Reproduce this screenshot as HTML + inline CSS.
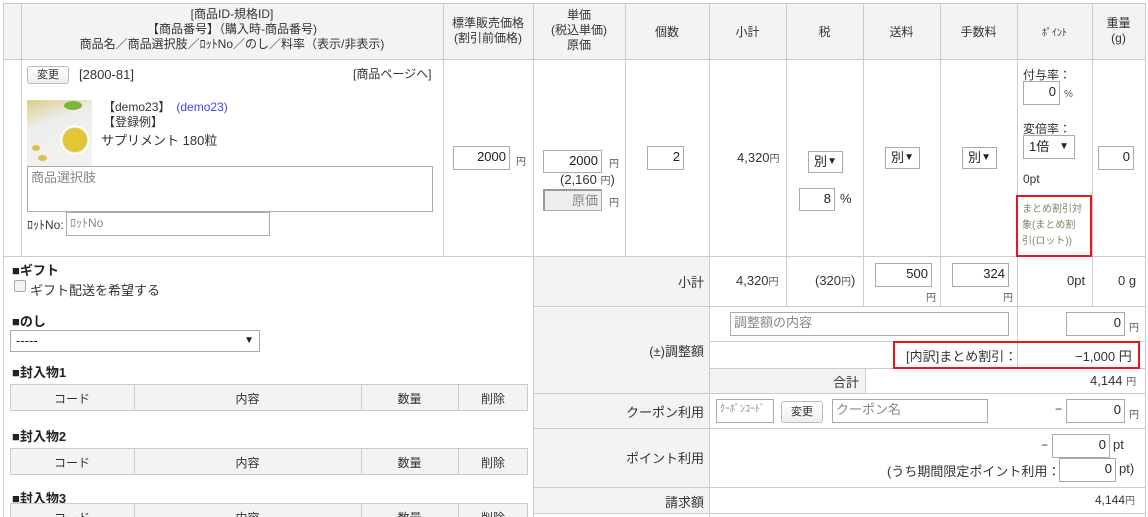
<!DOCTYPE html>
<html style="width:1148px;height:517px;overflow:hidden"><head><meta charset="utf-8">
<style>
*{box-sizing:border-box;margin:0;padding:0}
body{width:1148px;height:517px;overflow:hidden;background:#fff;position:relative;font-family:"Liberation Sans","Noto Sans CJK JP",sans-serif;font-size:12px;color:#333}
.a{position:absolute;white-space:nowrap}
.h{position:absolute;height:1px;background:#ccc}
.v{position:absolute;width:1px;background:#ccc}
.g{position:absolute;background:#f2f4f3}
.in{position:absolute;border:1px solid #aaa;background:#fff;font-size:13px;text-align:right;padding-right:3px;line-height:20px;color:#222}
.ph{color:#888;text-align:left;padding-left:3px}
.sel{position:absolute;border:1px solid #aaa;background:#fff;font-size:13px;padding-left:5px;line-height:19px;color:#222}
.sel:after{content:"▼";position:absolute;right:5px;font-size:10px}
.btn{position:absolute;border:1px solid #bbb;border-radius:3px;background:linear-gradient(#fff,#eee);font-size:11px;text-align:center;line-height:16px}
.c{text-align:center}
.r{text-align:right}
.y{font-size:10px;color:#555}
.b{font-weight:bold;font-size:13px;color:#222}
</style></head><body>
<div class="g" style="left:3px;top:3px;width:1142px;height:56px"></div>
<div class="h" style="left:3px;top:3px;width:1142px"></div>
<div class="h" style="left:3px;top:59px;width:1142px"></div>
<div class="h" style="left:3px;top:256px;width:1142px"></div>
<div class="v" style="left:3px;top:3px;height:514px"></div>
<div class="v" style="left:21px;top:3px;height:253px"></div>
<div class="v" style="left:443px;top:3px;height:253px"></div>
<div class="v" style="left:533px;top:3px;height:514px"></div>
<div class="v" style="left:625px;top:3px;height:253px"></div>
<div class="v" style="left:709px;top:3px;height:514px"></div>
<div class="v" style="left:786px;top:3px;height:303px"></div>
<div class="v" style="left:863px;top:3px;height:303px"></div>
<div class="v" style="left:940px;top:3px;height:303px"></div>
<div class="v" style="left:1017px;top:3px;height:365px"></div>
<div class="v" style="left:1092px;top:3px;height:303px"></div>
<div class="v" style="left:1145px;top:3px;height:514px"></div>
<div class="a c" style="left:21px;top:7px;width:422px;line-height:15px">[商品ID-規格ID]<br>【商品番号】（購入時-商品番号)<br>商品名／商品選択肢／ﾛｯﾄNo／のし／料率（表示/非表示)</div>
<div class="a c" style="left:443px;top:16px;width:90px;line-height:15px">標準販売価格<br>(割引前価格)</div>
<div class="a c" style="left:533px;top:8px;width:92px;line-height:15px">単価<br>(税込単価)<br>原価</div>
<div class="a c" style="left:625px;top:23px;width:84px">個数</div>
<div class="a c" style="left:709px;top:23px;width:77px">小計</div>
<div class="a c" style="left:786px;top:23px;width:77px">税</div>
<div class="a c" style="left:863px;top:23px;width:77px">送料</div>
<div class="a c" style="left:940px;top:23px;width:77px">手数料</div>
<div class="a c" style="left:1017px;top:24px;width:75px;font-size:10px">ﾎﾟｲﾝﾄ</div>
<div class="a c" style="left:1092px;top:16px;width:53px;line-height:15px">重量<br>(g)</div>
<div class="btn" style="left:27px;top:66px;width:42px;height:18px">変更</div>
<div class="a" style="left:79px;top:67px;font-size:13px">[2800-81]</div>
<div class="a" style="left:353px;top:65px;font-size:12px">[商品ページへ]</div>
<div class="a" style="left:27px;top:100px;width:65px;height:66px;background:linear-gradient(160deg,#d8cf8a 0,#eee 35%,#f2f2ef 100%)"></div>
<div class="a" style="left:60px;top:125px;width:30px;height:30px;border-radius:50%;background:radial-gradient(circle,#e6c92c 0,#dfc440 55%,#fff 62%,#e4e4e0 100%)"></div>
<div class="a" style="left:64px;top:101px;width:18px;height:9px;background:#7fb43c;border-radius:50%"></div>
<div class="a" style="left:32px;top:145px;width:8px;height:6px;background:#d8c24a;border-radius:50%"></div>
<div class="a" style="left:38px;top:155px;width:9px;height:6px;background:#d8c24a;border-radius:50%"></div>
<div class="a" style="left:103px;top:100px;font-size:12px;line-height:15px">【demo23】　<span style="color:#4444ee">(demo23)</span><br>【登録例】</div>
<div class="a" style="left:101px;top:130px;font-size:13px">サプリメント 180粒</div>
<div class="in ph" style="left:27px;top:166px;width:406px;height:46px;line-height:22px">商品選択肢</div>
<div class="a" style="left:27px;top:216px;font-size:12px">ﾛｯﾄNo:</div>
<div class="in ph" style="left:66px;top:212px;width:204px;height:24px;font-size:12px">ﾛｯﾄNo</div>
<div class="in" style="left:453px;top:146px;width:57px;height:24px">2000</div>
<div class="a y" style="left:516px;top:153px">円</div>
<div class="in" style="left:543px;top:150px;width:59px;height:23px">2000</div>
<div class="a y" style="left:609px;top:155px">円</div>
<div class="a" style="left:560px;top:172px;font-size:13px">(2,160 <span class="y">円</span>)</div>
<div class="in" style="left:543px;top:189px;width:59px;height:22px;background:#eee;color:#888;border-left:2px solid #999;border-top:2px solid #999">原価</div>
<div class="a y" style="left:609px;top:194px">円</div>
<div class="in" style="left:647px;top:146px;width:37px;height:24px">2</div>
<div class="a" style="left:737px;top:150px;font-size:13px">4,320<span class="y">円</span></div>
<div class="sel" style="left:808px;top:151px;width:35px;height:22px">別</div>
<div class="in" style="left:799px;top:188px;width:36px;height:23px">8</div>
<div class="a" style="left:840px;top:191px;font-size:13px">%</div>
<div class="sel" style="left:885px;top:147px;width:35px;height:22px">別</div>
<div class="sel" style="left:962px;top:147px;width:35px;height:22px">別</div>
<div class="a" style="left:1023px;top:66px">付与率：</div>
<div class="in" style="left:1023px;top:81px;width:37px;height:24px">0</div>
<div class="a y" style="left:1064px;top:89px">%</div>
<div class="a" style="left:1023px;top:120px">変倍率：</div>
<div class="sel" style="left:1023px;top:135px;width:52px;height:24px;line-height:22px">1倍</div>
<div class="a" style="left:1023px;top:172px">0pt</div>
<div class="a" style="left:1022px;top:202px;font-size:10px;line-height:16px;color:#7a8a6a">まとめ割引対<br>象(まとめ割<br>引(ロット))</div>
<div class="a" style="left:1016px;top:195px;width:76px;height:62px;border:2px solid #e8141e"></div>
<div class="in" style="left:1098px;top:146px;width:36px;height:24px">0</div>
<div class="g" style="left:534px;top:257px;width:175px;height:256px"></div>
<div class="g" style="left:710px;top:369px;width:155px;height:24px"></div>
<div class="h" style="left:533px;top:306px;width:612px"></div>
<div class="h" style="left:709px;top:341px;width:436px"></div>
<div class="h" style="left:709px;top:368px;width:436px"></div>
<div class="h" style="left:533px;top:393px;width:612px"></div>
<div class="h" style="left:533px;top:428px;width:612px"></div>
<div class="h" style="left:533px;top:487px;width:612px"></div>
<div class="h" style="left:533px;top:513px;width:612px"></div>
<div class="v" style="left:865px;top:368px;height:25px"></div>
<div class="a r" style="left:600px;top:272px;width:104px;font-size:13px">小計</div>
<div class="a" style="left:736px;top:273px;font-size:13px">4,320<span class="y">円</span></div>
<div class="a" style="left:815px;top:273px;font-size:13px">(320<span class="y">円</span>)</div>
<div class="in" style="left:875px;top:263px;width:57px;height:24px">500</div>
<div class="a y" style="left:926px;top:289px">円</div>
<div class="in" style="left:952px;top:263px;width:57px;height:24px">324</div>
<div class="a y" style="left:1003px;top:289px">円</div>
<div class="a" style="left:1067px;top:273px;font-size:13px">0pt</div>
<div class="a" style="left:1118px;top:273px;font-size:13px">0 g</div>
<div class="a r" style="left:600px;top:341px;width:104px;font-size:13px">(±)調整額</div>
<div class="in ph" style="left:730px;top:312px;width:279px;height:24px;font-size:13px">調整額の内容</div>
<div class="in" style="left:1066px;top:312px;width:59px;height:24px">0</div>
<div class="a y" style="left:1129px;top:319px">円</div>
<div class="a" style="left:893px;top:341px;width:247px;height:28px;border:2px solid #e8141e"></div>
<div class="a" style="left:906px;top:346px;font-size:13px">[内訳]まとめ割引：</div>
<div class="a" style="left:1075px;top:346px;font-size:13px">−1,000 円</div>
<div class="a r" style="left:760px;top:372px;width:99px;font-size:13px">合計</div>
<div class="a" style="left:1090px;top:373px;font-size:13px">4,144 <span class="y">円</span></div>
<div class="a r" style="left:600px;top:402px;width:104px;font-size:13px">クーポン利用</div>
<div class="in ph" style="left:716px;top:399px;width:58px;height:24px;font-size:10px">ｸｰﾎﾟﾝｺｰﾄﾞ</div>
<div class="btn" style="left:781px;top:401px;width:42px;height:22px;line-height:20px">変更</div>
<div class="in ph" style="left:832px;top:399px;width:156px;height:24px;font-size:13px">クーポン名</div>
<div class="a" style="left:1055px;top:402px">−</div>
<div class="in" style="left:1066px;top:399px;width:59px;height:24px">0</div>
<div class="a y" style="left:1129px;top:406px">円</div>
<div class="a r" style="left:600px;top:448px;width:104px;font-size:13px">ポイント利用</div>
<div class="a" style="left:1041px;top:438px">−</div>
<div class="in" style="left:1052px;top:434px;width:58px;height:24px">0</div>
<div class="a" style="left:1113px;top:437px;font-size:13px">pt</div>
<div class="a" style="left:887px;top:461px;font-size:13px">(うち期間限定ポイント利用：−</div>
<div class="in" style="left:1059px;top:458px;width:57px;height:24px">0</div>
<div class="a" style="left:1119px;top:461px;font-size:13px">pt)</div>
<div class="a r" style="left:600px;top:492px;width:104px;font-size:13px">請求額</div>
<div class="a" style="left:1095px;top:492px;font-size:12px">4,144<span class="y">円</span></div>
<div class="a b" style="left:12px;top:260px">■ギフト</div>
<div class="a" style="left:14px;top:280px;width:12px;height:12px;border:1px solid #aaa;border-radius:2px;background:#f3f3f3"></div>
<div class="a" style="left:30px;top:280px;font-size:13px">ギフト配送を希望する</div>
<div class="a b" style="left:12px;top:311px">■のし</div>
<div class="sel" style="left:10px;top:330px;width:250px;height:22px;line-height:20px">-----</div>
<div class="a b" style="left:12px;top:362px">■封入物1</div>
<div class="a b" style="left:12px;top:426px">■封入物2</div>
<div class="a b" style="left:12px;top:488px">■封入物3</div>
<div class="g" style="left:10px;top:384px;width:518px;height:27px;border:1px solid #ccc"></div>
<div class="g" style="left:10px;top:448px;width:518px;height:27px;border:1px solid #ccc"></div>
<div class="g" style="left:10px;top:503px;width:518px;height:14px;border:1px solid #ccc;border-bottom:none"></div>
<div class="v" style="left:134px;top:384px;height:27px"></div><div class="v" style="left:361px;top:384px;height:27px"></div><div class="v" style="left:458px;top:384px;height:27px"></div>
<div class="v" style="left:134px;top:448px;height:27px"></div><div class="v" style="left:361px;top:448px;height:27px"></div><div class="v" style="left:458px;top:448px;height:27px"></div>
<div class="v" style="left:134px;top:503px;height:14px"></div><div class="v" style="left:361px;top:503px;height:14px"></div><div class="v" style="left:458px;top:503px;height:14px"></div>
<div class="a c" style="left:10px;top:390px;width:124px">コード</div><div class="a c" style="left:134px;top:390px;width:227px">内容</div><div class="a c" style="left:361px;top:390px;width:97px">数量</div><div class="a c" style="left:458px;top:390px;width:70px">削除</div>
<div class="a c" style="left:10px;top:454px;width:124px">コード</div><div class="a c" style="left:134px;top:454px;width:227px">内容</div><div class="a c" style="left:361px;top:454px;width:97px">数量</div><div class="a c" style="left:458px;top:454px;width:70px">削除</div>
<div class="a c" style="left:10px;top:509px;width:124px">コード</div><div class="a c" style="left:134px;top:509px;width:227px">内容</div><div class="a c" style="left:361px;top:509px;width:97px">数量</div><div class="a c" style="left:458px;top:509px;width:70px">削除</div>
</body></html>
